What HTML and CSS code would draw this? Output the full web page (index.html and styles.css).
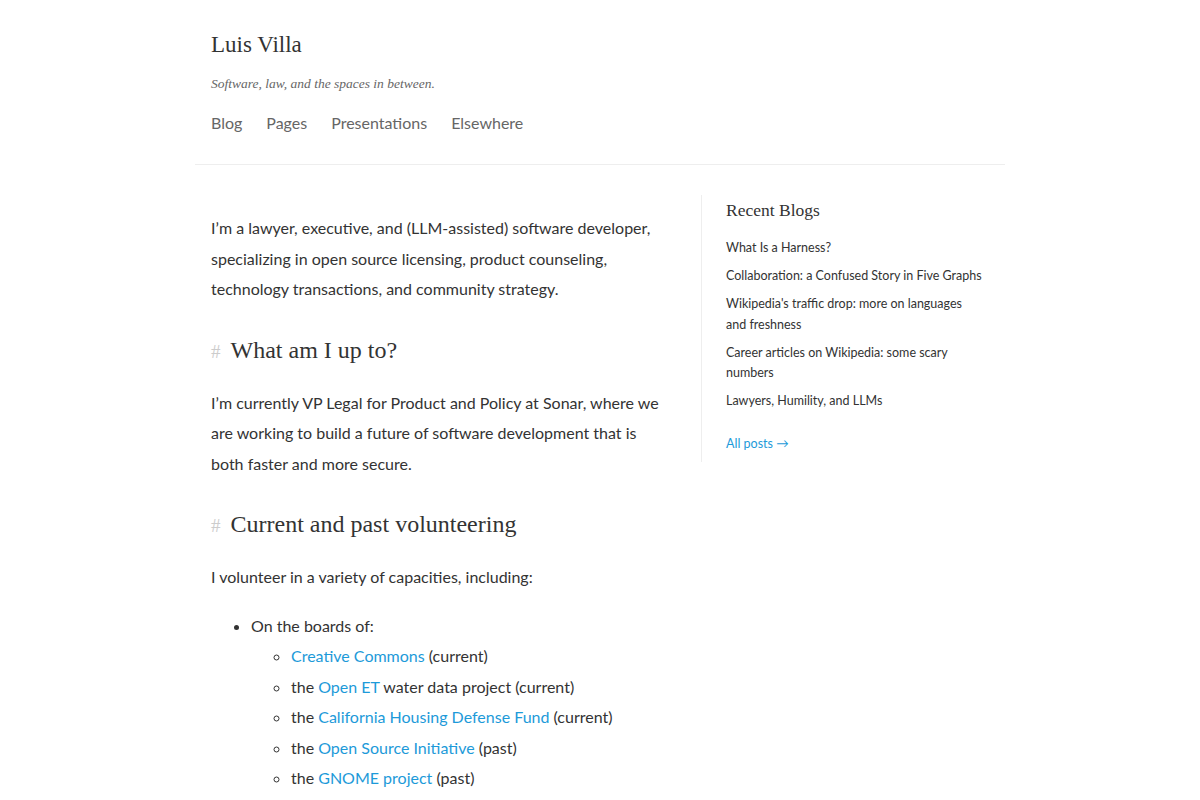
FILE: index.html
```html
<!DOCTYPE html>
<html lang="en">
<head>
    <meta charset="UTF-8">
    <meta name="viewport" content="width=device-width, initial-scale=1.0">
    <title>Luis Villa</title>
    <link rel="stylesheet" href="styles.css">
</head>
<body>
    <div class="container">
        <header class="site-header">
            <h1 class="site-title">Luis Villa</h1>
            <p class="tagline">Software, law, and the spaces in between.</p>
            <nav class="site-nav">
                <a href="#">Blog</a>
                <a href="#">Pages</a>
                <a href="#">Presentations</a>
                <a href="#">Elsewhere</a>
            </nav>
        </header>

        <div class="layout">
            <main class="content">
                <p>I’m a lawyer, executive, and (LLM-assisted) software developer, specializing in open source licensing, product counseling, technology transactions, and community strategy.</p>

                <h2><span class="anchor">#</span>What am I up to?</h2>
                <p>I’m currently VP Legal for Product and Policy at Sonar, where we are working to build a future of software development that is both faster and more secure.</p>

                <h2><span class="anchor">#</span>Current and past volunteering</h2>
                <p>I volunteer in a variety of capacities, including:</p>
                <ul>
                    <li>On the boards of:
                        <ul>
                            <li><a href="#">Creative Commons</a> (current)</li>
                            <li>the <a href="#">Open ET</a> water data project (current)</li>
                            <li>the <a href="#">California Housing Defense Fund</a> (current)</li>
                            <li>the <a href="#">Open Source Initiative</a> (past)</li>
                            <li>the <a href="#">GNOME project</a> (past)</li>
                        </ul>
                    </li>
                </ul>
            </main>

            <aside class="sidebar">
                <h3>Recent Blogs</h3>
                <ul class="recent">
                    <li><a href="#">What Is a Harness?</a></li>
                    <li><a href="#">Collaboration: a Confused Story in Five Graphs</a></li>
                    <li><a href="#">Wikipedia's traffic drop: more on languages and freshness</a></li>
                    <li><a href="#">Career articles on Wikipedia: some scary numbers</a></li>
                    <li><a href="#">Lawyers, Humility, and LLMs</a></li>
                </ul>
                <a class="all-posts" href="#">All posts →</a>
            </aside>
        </div>
    </div>
</body>
</html>
```

FILE: styles.css
```css
body {
    margin: 0;
    padding: 0;
    background: #fff;
    color: #333;
    font-family: Lato, "Open Sans", sans-serif;
    font-size: 16px;
}

a {
    color: #1d9ad9;
    text-decoration: none;
}

.container {
    width: 810px;
    margin: 0 auto;
}

.site-header {
    padding: 29px 15px 29px 16px;
    border-bottom: 1px solid #eee;
}

.site-title {
    margin: 0;
    font-family: "Liberation Serif", serif;
    font-weight: normal;
    font-size: 23px;
    line-height: 32px;
    color: #333;
}

.tagline {
    margin: 13px 0 0;
    font-family: "Liberation Serif", serif;
    font-style: italic;
    font-size: 13.5px;
    line-height: 20px;
    color: #666;
}

.site-nav {
    display: flex;
    gap: 24px;
    margin-top: 17px;
    line-height: 24px;
}

.site-nav a {
    color: #666;
    font-size: 16px;
}

.layout {
    display: flex;
    padding-top: 30px;
}

.content {
    flex-shrink: 0;
    width: 450px;
    padding: 0 40px 0 16px;
    font-size: 16px;
    line-height: 30.5px;
}

.content p {
    margin: 18px 0;
}

.content h2 {
    margin: 29px 0 20px;
    font-family: "Liberation Serif", serif;
    font-weight: normal;
    font-size: 24px;
    line-height: 32px;
    color: #333;
}

.anchor {
    color: #ccc;
    font-size: 19px;
    margin-right: 10px;
}

.content ul {
    margin: 0;
    padding-left: 40px;
}

.content ul ul {
    list-style: circle;
}

.sidebar {
    flex-shrink: 0;
    border-left: 1px solid #eee;
    padding: 0 15px 8px 24px;
    width: 256px;
    align-self: flex-start;
}

.sidebar h3 {
    margin: 0 0 13px;
    font-family: "Liberation Serif", serif;
    font-weight: normal;
    font-size: 17.5px;
    line-height: 30px;
    color: #333;
}

.recent {
    list-style: none;
    margin: 0;
    padding: 0;
}

.recent li {
    margin-bottom: 7.5px;
    font-size: 12.5px;
    line-height: 20.5px;
}

.recent a {
    color: #333;
}

.all-posts {
    display: inline-block;
    margin-top: 15px;
    font-size: 12.5px;
    line-height: 20px;
}
```
